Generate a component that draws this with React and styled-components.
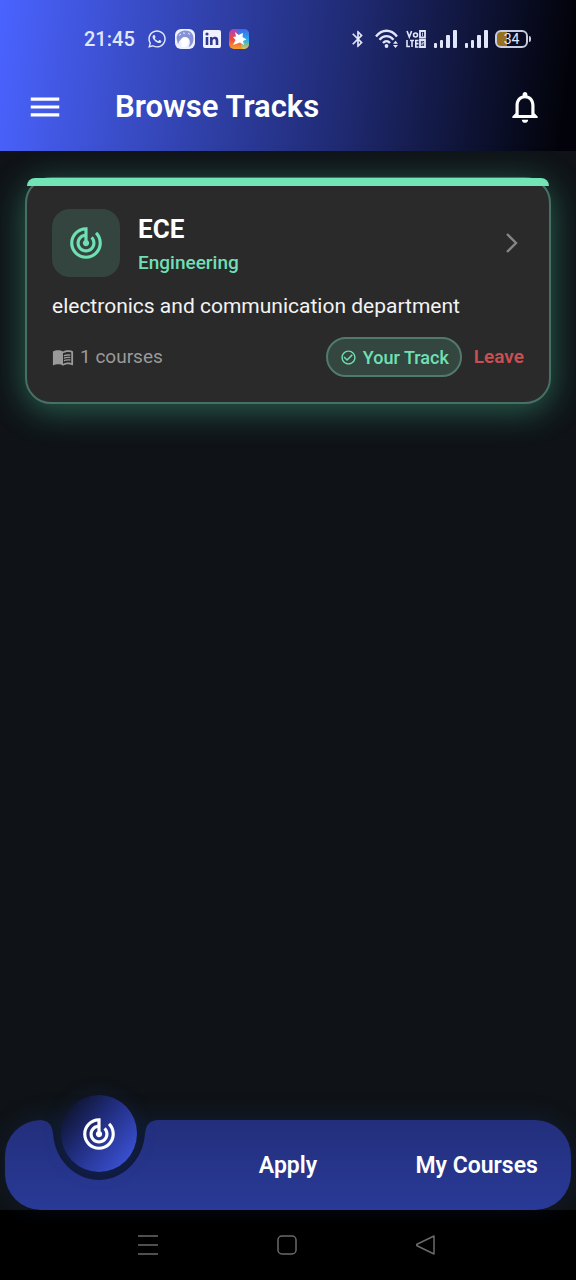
import React from "react";
import styled, { createGlobalStyle } from "styled-components";
import {
  MdMenu,
  MdNotificationsNone,
  MdTrackChanges,
  MdMenuBook,
  MdCheckCircleOutline,
  MdBluetooth,
} from "react-icons/md";
import { FaWhatsapp } from "react-icons/fa";

const GlobalStyle = createGlobalStyle`
  *, *::before, *::after { box-sizing: border-box; }
  html { background: #0f1317; }
  body { margin: 0; background: #0f1317; }
  button { font: inherit; border: 0; padding: 0; margin: 0; background: none; color: inherit; cursor: pointer; }
  h1, h2, p { margin: 0; }
  svg { display: block; }
`;

const Screen = styled.div`
  min-height: 100vh;
  display: flex;
  flex-direction: column;
  font-family: Roboto, "Liberation Sans", sans-serif;
  color: #fff;
  background: #0f1317;
`;

const Header = styled.header`
  background: linear-gradient(97deg, #4a63ff 0%, #1f2a72 60%, #02030a 97%);
`;

const StatusBar = styled.div`
  display: flex;
  align-items: center;
  justify-content: space-between;
  padding: 24px 48px 0 84px;
  height: 54px;
  color: #e2e6fb;
`;

const StatusGroup = styled.div`
  display: flex;
  align-items: center;
  gap: ${(p) => p.$gap}px;
`;

const Clock = styled.time`
  font-size: 20px;
  line-height: 24px;
  font-weight: 500;
  margin-right: 4px;
`;

const AppBar = styled.div`
  display: flex;
  align-items: center;
  height: 97px;
  padding: 8px 32px 0 26px;
`;

const Title = styled.h1`
  flex: 1;
  margin-left: 51px;
  font-size: 31px;
  line-height: 36px;
  font-weight: 600;
`;

const IconButton = styled.button`
  display: grid;
  place-items: center;
`;

const Content = styled.main`
  flex: 1;
  padding: 26px 25px;
`;

const Card = styled.article`
  position: relative;
  padding: 30px 25px 25px;
  border: 2px solid #477064;
  border-radius: 26px;
  background: #2a2a2a;
  box-shadow: 0 6px 32px 2px rgba(75, 190, 150, 0.42);
`;

const CardAccent = styled.div`
  position: absolute;
  top: -1px;
  left: 0;
  right: 0;
  height: 8px;
  border-radius: 8px 8px 0 0;
  background: #72e4b8;
`;

const CardHead = styled.div`
  display: flex;
  align-items: center;
`;

const TrackBadge = styled.div`
  display: grid;
  place-items: center;
  width: 68px;
  height: 68px;
  border-radius: 18px;
  background: #34453f;
  color: #6fdfb4;
`;

const TrackNames = styled.div`
  flex: 1;
  margin-left: 18px;
  padding-top: 4px;
`;

const TrackTitle = styled.h2`
  font-size: 26px;
  line-height: 32px;
  font-weight: 700;
`;

const TrackField = styled.p`
  margin-top: 4px;
  font-size: 19px;
  line-height: 28px;
  font-weight: 500;
  color: #6fdfb4;
`;

const Description = styled.p`
  margin-top: 14px;
  font-size: 21px;
  line-height: 30px;
  color: #f3f3f3;
`;

const CardFoot = styled.div`
  display: flex;
  align-items: center;
  margin-top: 16px;
`;

const CourseCount = styled.div`
  flex: 1;
  display: flex;
  align-items: center;
  gap: 6px;
  font-size: 19px;
  line-height: 24px;
  color: #9a9a9a;
`;

const TrackPill = styled.div`
  display: flex;
  align-items: center;
  gap: 6px;
  height: 40px;
  padding: 0 11px 0 12px;
  border: 2px solid #51796c;
  border-radius: 20px;
  background: #33463f;
  font-size: 18px;
  font-weight: 500;
  color: #72e0b6;
`;

const LeaveButton = styled.button`
  && {
    margin-left: 12px;
    font-size: 19px;
    line-height: 24px;
    font-weight: 600;
    color: #cb4f52;
  }
`;

const TabBar = styled.nav`
  position: relative;
  display: grid;
  grid-template-columns: repeat(3, 1fr);
  margin: 0 5px;
  height: 90px;
  border-radius: 36px;
  background: linear-gradient(180deg, #232f7c, #293a97);
  box-shadow: 0 -2px 24px rgba(30, 60, 130, 0.22);
`;

const Tab = styled.button`
  && {
    position: relative;
    font-size: 23px;
    line-height: 28px;
    font-weight: 600;
    padding-top: 2px;
  }
`;

const Notch = styled.svg`
  position: absolute;
  top: -2px;
  left: 50%;
  margin-left: -60px;
`;

const ActiveBall = styled.span`
  position: absolute;
  top: -25px;
  left: 50%;
  margin-left: -38px;
  width: 76px;
  height: 77px;
  border-radius: 50%;
  display: grid;
  place-items: center;
  background: linear-gradient(130deg, #0e1530 12%, #212e80 45%, #3f56e0 95%);
  box-shadow: 0 0 20px rgba(40, 62, 170, 0.18);
`;

const SystemBar = styled.footer`
  display: grid;
  grid-template-columns: repeat(3, 1fr);
  height: 70px;
  padding: 0 81px 0 79px;
  background: #000;
`;

function Signal() {
  return (
    <svg width="24" height="18" viewBox="0 0 24 18" fill="currentColor">
      <rect x="1" y="13" width="3" height="5" rx="1" />
      <rect x="7" y="10" width="3" height="8" rx="1" />
      <rect x="13" y="5" width="4" height="13" rx="1" />
      <rect x="20" y="0" width="4" height="18" rx="1" />
    </svg>
  );
}

function GalleryIcon() {
  return (
    <svg width="20" height="20" viewBox="0 0 20 20">
      <rect width="20" height="20" rx="6" fill="#eef1ff" />
      <path d="M1.500 9C2 4 6 1.500 10.500 1.500c5 0 8 3.500 8 8 0 4.500-2 7.500-5 8.500 1.500-2.500 2-6 .5-8-2-2.500-5.500-2.500-7.500-.5L4 12.500l-1 3Z" fill="#8792d6" />
      <path d="M4 6.500l2-1.500M8 4l2 .3M13 4l2 1.500M3.500 15l2 2.500" stroke="#e6eaff" strokeWidth="1" fill="none" />
      <path d="M7 10l2-1.500 3 .5 1.500 3-.8 4L10 18l-4-.5 1-3-1.500-2Z" fill="#fff" />
    </svg>
  );
}

function LinkedInIcon() {
  return (
    <svg width="18" height="18" viewBox="0 0 18 18">
      <rect width="18" height="18" rx="2" fill="#f0f2ff" />
      <g fill="#2d3a92">
        <circle cx="4" cy="4" r="1.6" />
        <path d="M2.7 7h2.6v8H2.7zM7 7h2.5v1.2C10.100 7.300 11 6.800 12.100 6.800c2.200 0 3.200 1.400 3.200 3.700V15h-2.600v-4c0-1.200-.4-2-1.400-2-1.100 0-1.700.8-1.700 2v4H7z" />
      </g>
    </svg>
  );
}

function StarAppIcon() {
  return (
    <svg width="20" height="20" viewBox="0 0 20 20">
      <defs>
        <linearGradient id="warm" x1="0" y1="0" x2="0" y2="1">
          <stop offset="0" stopColor="#a544c4" />
          <stop offset=".5" stopColor="#f0483d" />
          <stop offset="1" stopColor="#f6a02c" />
        </linearGradient>
        <linearGradient id="cool" x1="0" y1="0" x2="0" y2="1">
          <stop offset="0" stopColor="#3a68ee" />
          <stop offset=".6" stopColor="#2bb3e8" />
          <stop offset="1" stopColor="#e8c33c" />
        </linearGradient>
      </defs>
      <rect width="20" height="20" rx="5" fill="url(#warm)" />
      <path d="M8 0h7a5 5 0 0 1 5 5v10a5 5 0 0 1-5 5h-2l-2-9Z" fill="url(#cool)" />
      <path d="M6 3l3.500 3L14 4l-.5 4 4 2.500-3.500 1.500 1 4-4-2.500L4 16l2.500-5L4 8l3-.5Z" fill="#fff" />
    </svg>
  );
}

function WifiIcon() {
  return (
    <svg width="24" height="20" viewBox="0 0 24 20" fill="none" stroke="currentColor" strokeWidth="2.300">
      <path d="M1 7.500C7-.2 16-.2 22 7.500M4.500 10.800c4-5 10-5 14 0M8 14c2.200-2.600 4.800-2.600 7 0" />
      <circle cx="11.500" cy="17" r="1.900" fill="currentColor" stroke="none" />
      <path d="M18 14.800l2.500-3 2.500 3zM18 16l2.500 3 2.500-3z" fill="currentColor" stroke="none" />
    </svg>
  );
}

function VolteIcon() {
  return (
    <svg width="20" height="18" viewBox="0 0 20 18" fill="none" stroke="currentColor" strokeWidth="1.600">
      <path d="M1 1l2.300 6L5.600 1M1 10v6.500h3M4 10.500h4M6 10.500V17M12.500 10.500H9.800V17h2.700M10 13.600h2.500" />
      <circle cx="9.500" cy="5" r="2" />
      <path d="M14 1h5v6.500h-5zM14 10h5v7h-5z" strokeWidth="1.800" />
      <path d="M16.500 2.500v3.500M15.500 12h1.800v1.500h-1.500V15h1.800" strokeWidth=".8" />
    </svg>
  );
}

const BatteryShell = styled.div`
  position: relative;
  display: grid;
  place-items: center;
  width: 33px;
  height: 18px;
  border: 2px solid #c9cbe0;
  border-radius: 6px;
  background: linear-gradient(90deg, #96711f 36%, transparent 36%);
  font-size: 14px;
  line-height: 14px;
  font-weight: 400;
  &::after {
    content: "";
    position: absolute;
    right: -5px;
    top: 4px;
    width: 2px;
    height: 6px;
    border-radius: 0 2px 2px 0;
    background: #c9cbe0;
  }
`;

export default function App() {
  return (
    <Screen>
      <GlobalStyle />
      <Header>
        <StatusBar>
          <StatusGroup $gap={8}>
            <Clock>21:45</Clock>
            <FaWhatsapp size={20} />
            <GalleryIcon />
            <LinkedInIcon />
            <StarAppIcon />
          </StatusGroup>
          <StatusGroup $gap={7}>
            <MdBluetooth size={20} />
            <WifiIcon />
            <VolteIcon />
            <Signal />
            <Signal />
            <BatteryShell>34</BatteryShell>
          </StatusGroup>
        </StatusBar>
        <AppBar>
          <IconButton type="button" aria-label="Open menu">
            <MdMenu size={38} />
          </IconButton>
          <Title>Browse Tracks</Title>
          <IconButton type="button" aria-label="Notifications">
            <MdNotificationsNone size={38} />
          </IconButton>
        </AppBar>
      </Header>

      <Content>
        <Card>
          <CardAccent />
          <CardHead>
            <TrackBadge>
              <MdTrackChanges size={38} />
            </TrackBadge>
            <TrackNames>
              <TrackTitle>ECE</TrackTitle>
              <TrackField>Engineering</TrackField>
            </TrackNames>
            <IconButton type="button" aria-label="Open track">
              <svg width="24" height="24" viewBox="0 0 24 24" fill="none" stroke="#858585" strokeWidth="2.400">
                <path d="M7 3l9 9-9 9" />
              </svg>
            </IconButton>
          </CardHead>
          <Description>electronics and communication department</Description>
          <CardFoot>
            <CourseCount>
              <MdMenuBook size={22} />
              1 courses
            </CourseCount>
            <TrackPill>
              <MdCheckCircleOutline size={17} />
              Your Track
            </TrackPill>
            <LeaveButton type="button">Leave</LeaveButton>
          </CardFoot>
        </Card>
      </Content>

      <TabBar>
        <Tab type="button" aria-label="Tracks">
          <Notch width="120" height="64" viewBox="0 0 120 64">
            <defs>
              <linearGradient id="notchShade" x1="0" y1="0" x2="0" y2="1">
                <stop offset="0" stopColor="#0e1823" />
                <stop offset="1" stopColor="#101b42" />
              </linearGradient>
            </defs>
            <path d="M0 0H120V2C110 2 107 7 106 16C104 42 84 62 60 62C36 62 16 42 14 16C13 7 10 2 0 2Z" fill="url(#notchShade)" />
          </Notch>
          <ActiveBall>
            <MdTrackChanges size={38} />
          </ActiveBall>
        </Tab>
        <Tab type="button">Apply</Tab>
        <Tab type="button">My Courses</Tab>
      </TabBar>

      <SystemBar>
        <IconButton type="button" aria-label="Recent apps">
          <svg width="20" height="20" viewBox="0 0 20 20" stroke="#6a6a6a" strokeWidth="1.500">
            <path d="M0 1h20M0 10h20M0 19h20" />
          </svg>
        </IconButton>
        <IconButton type="button" aria-label="Home">
          <svg width="20" height="20" viewBox="0 0 20 20" fill="none" stroke="#6a6a6a" strokeWidth="1.500">
            <rect x="1" y="1" width="18" height="18" rx="4" />
          </svg>
        </IconButton>
        <IconButton type="button" aria-label="Back">
          <svg width="20" height="20" viewBox="0 0 20 20" fill="none" stroke="#6a6a6a" strokeWidth="1.500" strokeLinejoin="round">
            <path d="M18 1v18L1 10.800q-1-.8 0-1.600Z" />
          </svg>
        </IconButton>
      </SystemBar>
    </Screen>
  );
}
